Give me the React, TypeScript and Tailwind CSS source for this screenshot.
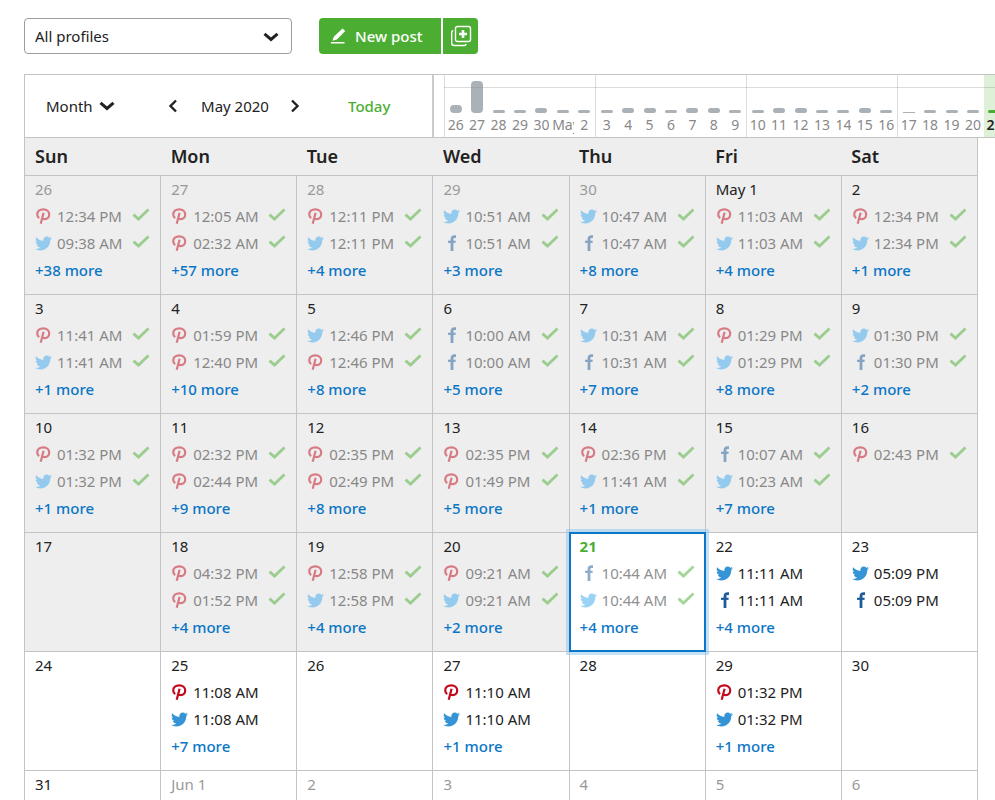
import { FaTwitter } from 'react-icons/fa';

type Network = 'p' | 't' | 'f';
type Post = [Network, string];

interface Day {
    label: string;
    posts?: Post[];
    more?: number;
}

const WEEKDAYS = ['Sun', 'Mon', 'Tue', 'Wed', 'Thu', 'Fri', 'Sat'];

// Index of the current day in the flat list of days (May 21)
const TODAY = 25;
const MONTH_START = 5;
const MONTH_END = 35;

const DAYS: Day[] = [
    { label: '26', posts: [['p', '12:34 PM'], ['t', '09:38 AM']], more: 38 },
    { label: '27', posts: [['p', '12:05 AM'], ['p', '02:32 AM']], more: 57 },
    { label: '28', posts: [['p', '12:11 PM'], ['t', '12:11 PM']], more: 4 },
    { label: '29', posts: [['t', '10:51 AM'], ['f', '10:51 AM']], more: 3 },
    { label: '30', posts: [['t', '10:47 AM'], ['f', '10:47 AM']], more: 8 },
    { label: 'May 1', posts: [['p', '11:03 AM'], ['t', '11:03 AM']], more: 4 },
    { label: '2', posts: [['p', '12:34 PM'], ['t', '12:34 PM']], more: 1 },

    { label: '3', posts: [['p', '11:41 AM'], ['t', '11:41 AM']], more: 1 },
    { label: '4', posts: [['p', '01:59 PM'], ['p', '12:40 PM']], more: 10 },
    { label: '5', posts: [['t', '12:46 PM'], ['p', '12:46 PM']], more: 8 },
    { label: '6', posts: [['f', '10:00 AM'], ['f', '10:00 AM']], more: 5 },
    { label: '7', posts: [['t', '10:31 AM'], ['f', '10:31 AM']], more: 7 },
    { label: '8', posts: [['p', '01:29 PM'], ['t', '01:29 PM']], more: 8 },
    { label: '9', posts: [['t', '01:30 PM'], ['f', '01:30 PM']], more: 2 },

    { label: '10', posts: [['p', '01:32 PM'], ['t', '01:32 PM']], more: 1 },
    { label: '11', posts: [['p', '02:32 PM'], ['p', '02:44 PM']], more: 9 },
    { label: '12', posts: [['p', '02:35 PM'], ['p', '02:49 PM']], more: 8 },
    { label: '13', posts: [['p', '02:35 PM'], ['p', '01:49 PM']], more: 5 },
    { label: '14', posts: [['p', '02:36 PM'], ['t', '11:41 AM']], more: 1 },
    { label: '15', posts: [['f', '10:07 AM'], ['t', '10:23 AM']], more: 7 },
    { label: '16', posts: [['p', '02:43 PM']] },

    { label: '17' },
    { label: '18', posts: [['p', '04:32 PM'], ['p', '01:52 PM']], more: 4 },
    { label: '19', posts: [['p', '12:58 PM'], ['t', '12:58 PM']], more: 4 },
    { label: '20', posts: [['p', '09:21 AM'], ['t', '09:21 AM']], more: 2 },
    { label: '21', posts: [['f', '10:44 AM'], ['t', '10:44 AM']], more: 4 },
    { label: '22', posts: [['t', '11:11 AM'], ['f', '11:11 AM']], more: 4 },
    { label: '23', posts: [['t', '05:09 PM'], ['f', '05:09 PM']] },

    { label: '24' },
    { label: '25', posts: [['p', '11:08 AM'], ['t', '11:08 AM']], more: 7 },
    { label: '26' },
    { label: '27', posts: [['p', '11:10 AM'], ['t', '11:10 AM']], more: 1 },
    { label: '28' },
    { label: '29', posts: [['p', '01:32 PM'], ['t', '01:32 PM']], more: 1 },
    { label: '30' },

    { label: '31' },
    { label: 'Jun 1' },
    { label: '2' },
    { label: '3' },
    { label: '4' },
    { label: '5' },
    { label: '6' },
];

// Posts per day in the timeline strip, as bar heights in pixels
const TIMELINE: [string, number][][] = [
    [['26', 8], ['27', 32], ['28', 3], ['29', 3], ['30', 5], ['May', 3], ['2', 3]],
    [['3', 3], ['4', 5], ['5', 5], ['6', 3], ['7', 5], ['8', 5], ['9', 3]],
    [['10', 3], ['11', 5], ['12', 5], ['13', 3], ['14', 3], ['15', 5], ['16', 3]],
    [['17', 1], ['18', 3], ['19', 3], ['20', 3], ['21', 3]],
];

function Chevron({ className }: { className: string }) {
    return (
        <svg viewBox="0 0 16 10" className={className} fill="none" stroke="currentColor" strokeWidth="3" aria-hidden="true">
            <path d="M1.5 1.8 8 7.4l6.5-5.6" />
        </svg>
    );
}

function NetworkIcon({ network, sent }: { network: Network; sent: boolean }) {
    if (network === 'p') {
        return (
            <svg viewBox="0 0 16 16" className="size-4 text-[#c4081c]" fill="none" stroke="currentColor" strokeWidth="2.2" aria-hidden="true">
                <path d="M4.200 10.200C2.700 9.200 2.200 7.800 2.200 6.300c0-3 2.700-4.900 6.100-4.900 3.500 0 5.900 2 5.900 4.900 0 2.900-1.900 4.900-4.300 4.900-1.500 0-2.300-.6-2.700-1.500M8.600 4.700 5.700 15.700" />
            </svg>
        );
    }
    if (network === 't') {
        return <FaTwitter size={17} className={`-mr-px ${sent ? 'text-[#3aa8ee]' : 'text-[#3594d6]'}`} />;
    }
    return (
        <svg viewBox="0 0 16 16" className="size-4 text-[#1c5c99]" fill="none" stroke="currentColor" strokeWidth="2.8" aria-hidden="true">
            <path d="M13 1.600h-1.400C9.800 1.600 9 2.500 9 4.200V16" />
            <path d="M5 6.800h7.600" strokeWidth="2.200" />
        </svg>
    );
}

function PostRow({ post, sent }: { post: Post; sent: boolean }) {
    return (
        <li className={`flex h-[27px] items-center ${sent ? 'opacity-50' : ''}`}>
            <NetworkIcon network={post[0]} sent={sent} />
            <span className="ml-[6px] grow whitespace-nowrap text-[#222]">{post[1]}</span>
            {sent && (
                <svg viewBox="0 0 18 16" className="mr-[10px] h-4 w-[18px] text-[#4bae32]" fill="none" stroke="currentColor" strokeWidth="2.8" aria-label="Sent">
                    <path d="m1.500 6.600 5 4.400L16.500 1.500" />
                </svg>
            )}
        </li>
    );
}

function DayCell({ day, index }: { day: Day; index: number }) {
    const isToday = index === TODAY;
    const outside = index < MONTH_START || index > MONTH_END;

    return (
        <td
            className={`relative h-[119px] border border-[#c4c4c4] p-0 pl-[10px] align-top ${index < TODAY ? 'bg-[#eee]' : 'bg-white'
                } ${isToday ? 'z-10' : ''}`}
        >
            {isToday && (
                <div className="pointer-events-none absolute -inset-px border-2 border-[#0b76c5] ring-3 ring-[#8cc4ee]/50" />
            )}
            <div className={`h-[27px] leading-[27px] ${isToday ? 'font-bold text-[#4bae32]' : outside ? 'text-[#999]' : 'text-[#222]'}`}>
                {day.label}
            </div>
            {day.posts && (
                <ul>
                    {day.posts.map((post, i) => (
                        <PostRow key={i} post={post} sent={index <= TODAY} />
                    ))}
                </ul>
            )}
            {day.more && (
                <a href="#" className="block leading-[27px] font-medium text-[#0b76c5]">
                    +{day.more} more
                </a>
            )}
        </td>
    );
}

function Timeline() {
    return (
        <div className="relative ml-[10px] flex min-w-0 grow overflow-hidden">
            {TIMELINE.map((week, w) => (
                <div key={w} className="grid w-[151px] shrink-0 grid-cols-7 border-l border-[#ddd]">
                    {week.map(([label, height]) => {
                        const current = label === '21';
                        return (
                            <div key={label} className={`flex flex-col items-center justify-end overflow-hidden ${current ? 'bg-[#def0d8]' : ''}`}>
                                <div
                                    className={`w-3 ${height > 1 ? 'rounded-sm' : ''} ${current ? 'bg-[#4bae32]' : 'bg-[#abb2b7]'}`}
                                    style={{ height }}
                                />
                                <div className={`max-w-full overflow-hidden text-sm leading-6 ${current ? 'font-semibold text-[#222]' : 'text-[#888]'}`}>
                                    {label}
                                </div>
                            </div>
                        );
                    })}
                </div>
            ))}
            <div className="absolute inset-x-0 top-3 h-px bg-[#888]/30" />
        </div>
    );
}

export default function App() {
    const weeks = [0, 1, 2, 3, 4, 5].map((w) => DAYS.slice(w * 7, w * 7 + 7));

    return (
        <main className="h-screen overflow-hidden bg-white pt-[18px] pl-6 font-['Noto_Sans',sans-serif] text-[15px] text-[#222]">
            <div className="flex gap-[27px]">
                <div className="relative w-[268px]">
                    <select aria-label="Profiles" className="h-9 w-full appearance-none rounded-[4px] border border-[#989fa3] bg-white pl-[10px]">
                        <option>All profiles</option>
                    </select>
                    <Chevron className="pointer-events-none absolute top-[14px] right-[13px] h-[10px] w-4" />
                </div>
                <div className="flex gap-[2px] text-white">
                    <button className="flex h-9 w-[122px] items-center gap-[9px] rounded-l-[4px] bg-[#4bae32] pl-[11px] font-medium">
                        <svg viewBox="0 0 16 16" className="size-4" fill="currentColor" aria-hidden="true">
                            <path d="M12.600.400 15.200 2.900l-8.300 8.700-4.400 1.200 1.300-4zM1 14h13.500v1.600H1z" />
                        </svg>
                        New post
                    </button>
                    <button aria-label="Bulk add" className="flex h-9 w-[35px] items-center justify-center rounded-r-[4px] bg-[#4bae32]">
                        <svg viewBox="0 0 22 22" className="size-[22px]" fill="none" stroke="currentColor" aria-hidden="true">
                            <rect x="5.500" y="1.500" width="15" height="15" rx="2" strokeWidth="1.400" />
                            <path d="M3.200 5.500c-1 .3-1.500 1-1.500 2v10.500a2.500 2.500 0 0 0 2.500 2.500h10c1 0 1.800-.6 2-1.500" strokeWidth="1.400" />
                            <path d="M13 5v8M9 9h8" strokeWidth="2.600" />
                        </svg>
                    </button>
                </div>
            </div>

            <div className="mt-5 h-16 border-t border-l border-[#c4c4c4]">
                <div className="flex h-full border-b border-[#c4c4c4]">
                    <div className="flex w-[409px] shrink-0 items-center border-r-2 border-[#ccc] pl-[21px]">
                        <button className="flex w-[122px] items-center gap-[6px]">
                            Month
                            <Chevron className="h-[10px] w-4" />
                        </button>
                        <button aria-label="Previous month" className="w-3">
                            <svg viewBox="0 0 10 14" className="h-[14px] w-[10px]" fill="none" stroke="currentColor" strokeWidth="2.400">
                                <path d="M8 1.500 2.500 7 8 12.500" />
                            </svg>
                        </button>
                        <span className="w-[110px] text-center">May 2020</span>
                        <button aria-label="Next month" className="w-3">
                            <svg viewBox="0 0 10 14" className="h-[14px] w-[10px]" fill="none" stroke="currentColor" strokeWidth="2.400">
                                <path d="m2 1.500 5.500 5.500L2 12.500" />
                            </svg>
                        </button>
                        <button className="ml-[46px] font-medium text-[#4bae32]">Today</button>
                    </div>
                    <Timeline />
                </div>
            </div>

            <div className="pr-[17px]">
                <table className="w-full table-fixed border-collapse">
                    <thead>
                        <tr>
                            {WEEKDAYS.map((name) => (
                                <th key={name} className="h-[37px] border-b border-[#c4c4c4] bg-[#eee] p-0 pl-[10px] text-left text-lg leading-7 font-semibold first:border-l last:border-r">
                                    {name}
                                </th>
                            ))}
                        </tr>
                    </thead>
                    <tbody>
                        {weeks.map((week, w) => (
                            <tr key={w}>
                                {week.map((day, d) => (
                                    <DayCell key={d} day={day} index={w * 7 + d} />
                                ))}
                            </tr>
                        ))}
                    </tbody>
                </table>
            </div>
        </main>
    );
}
